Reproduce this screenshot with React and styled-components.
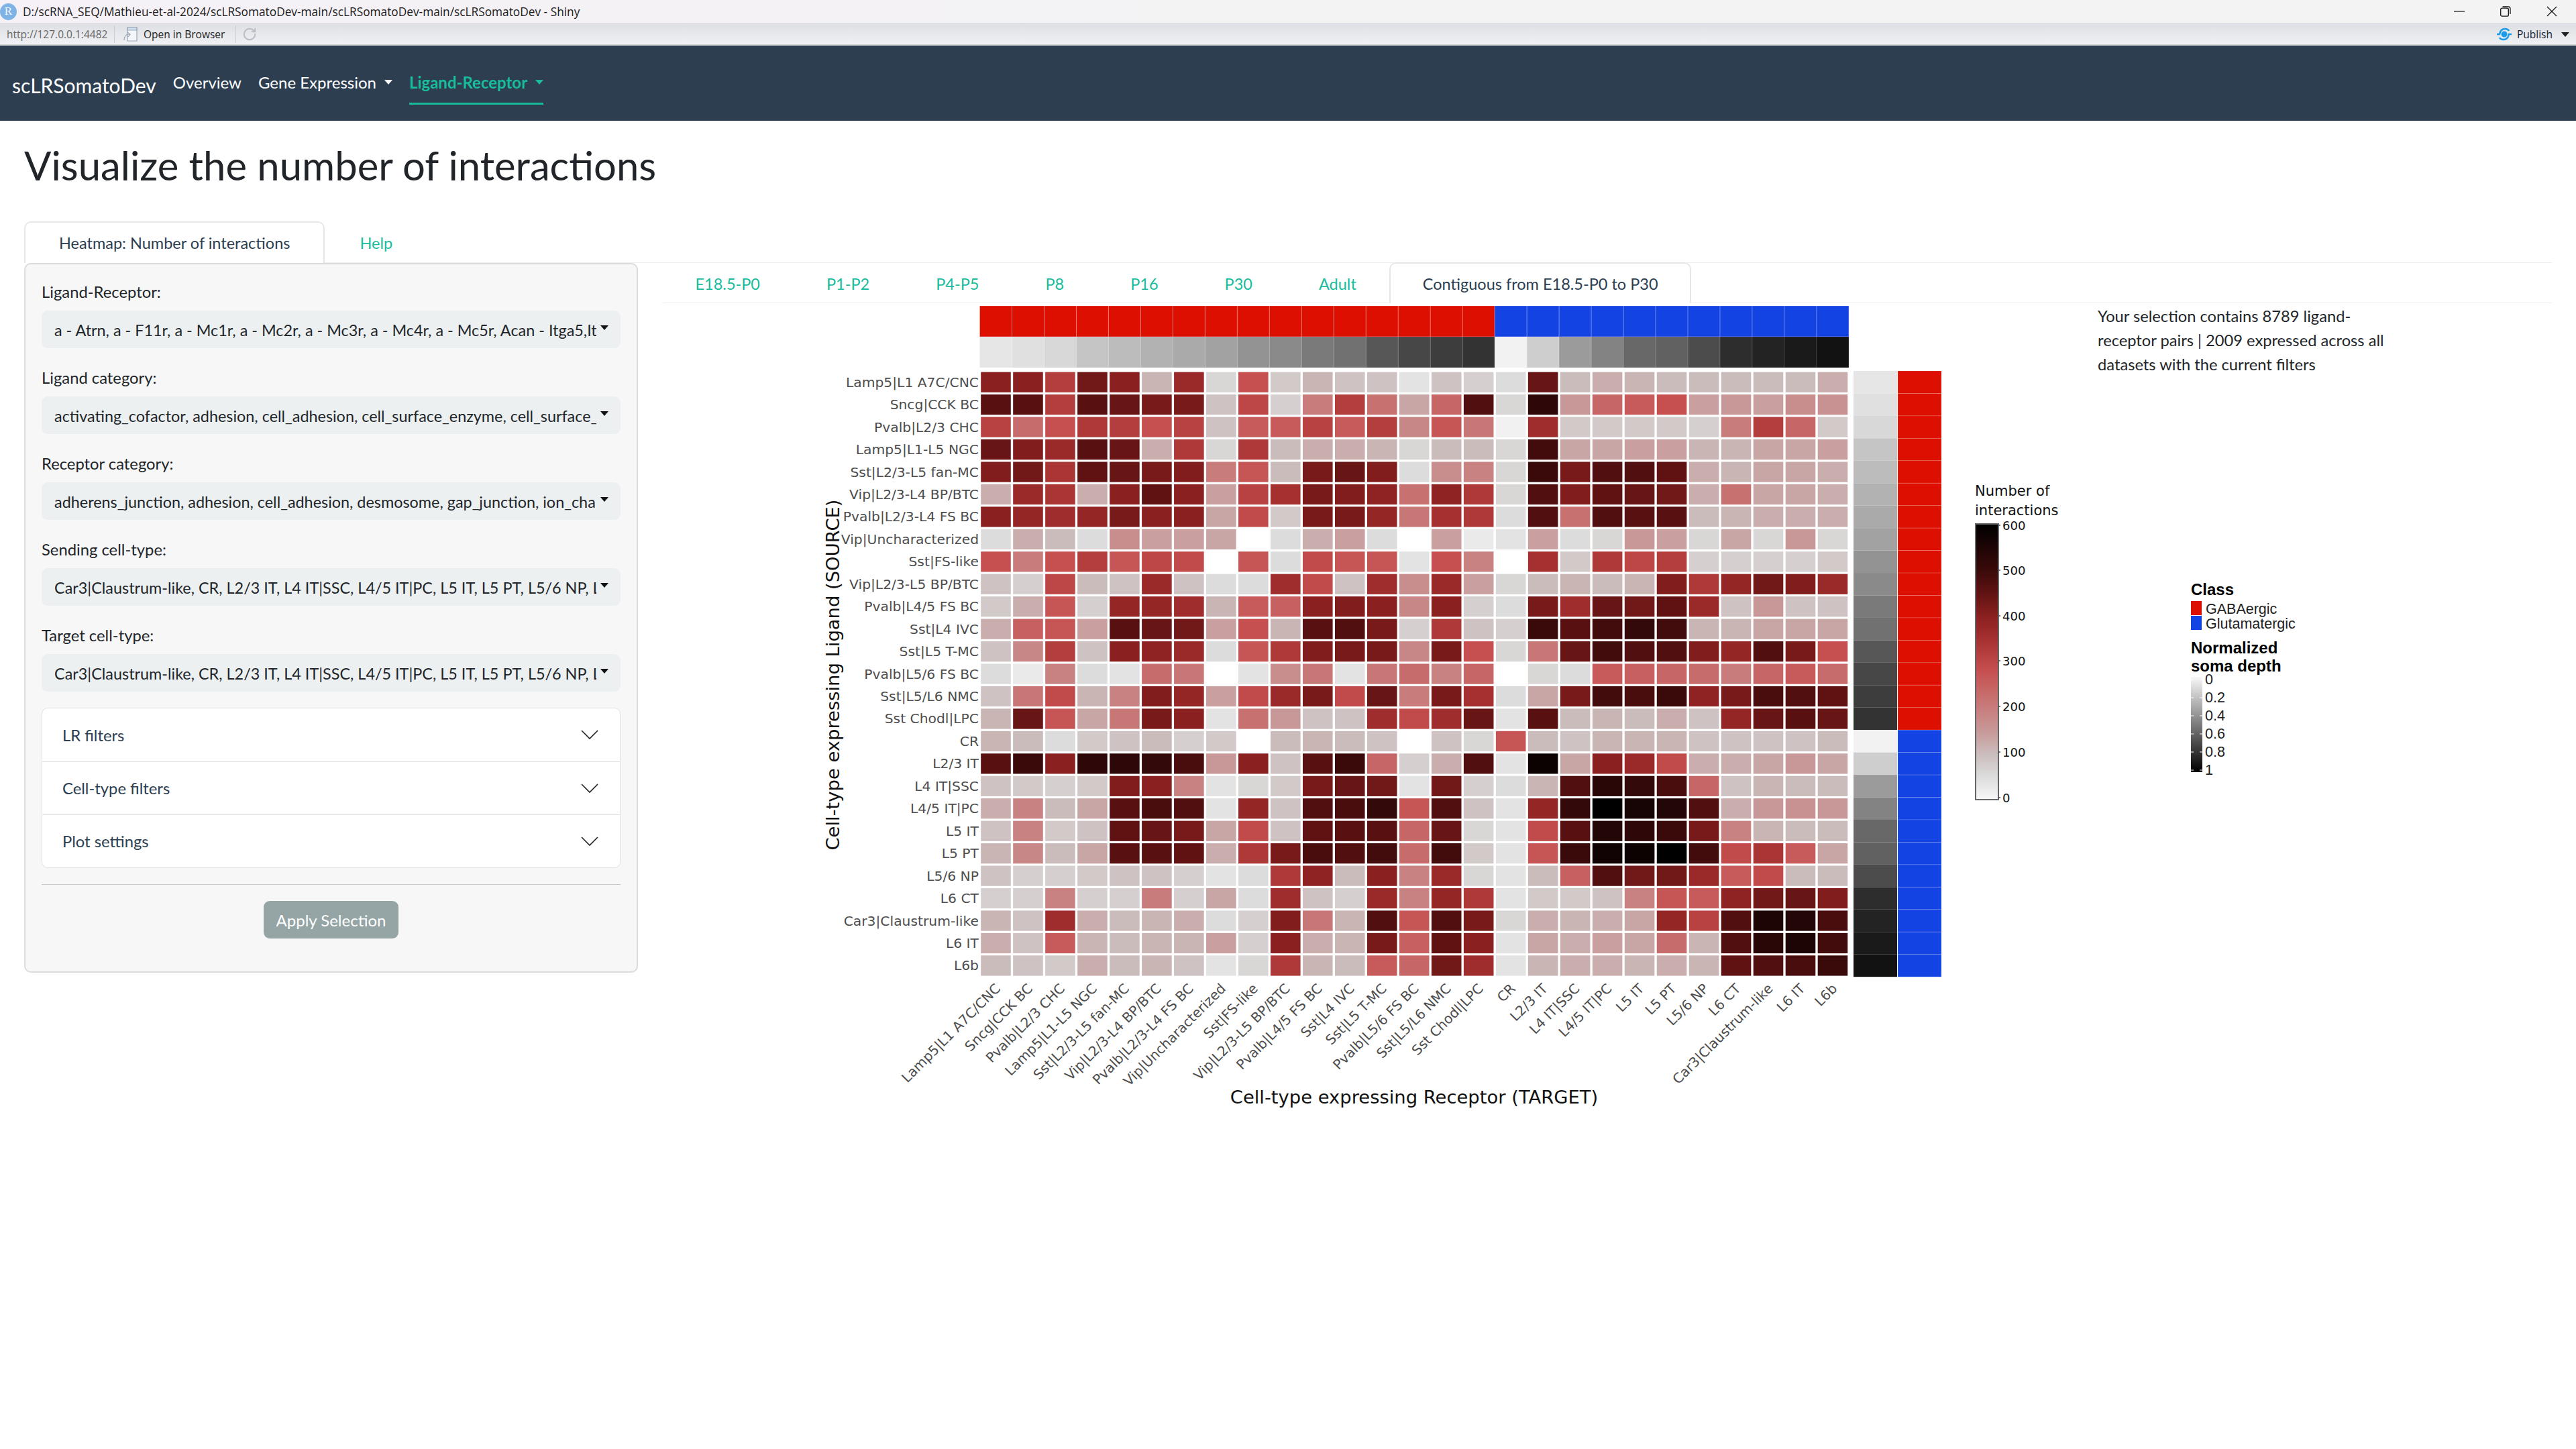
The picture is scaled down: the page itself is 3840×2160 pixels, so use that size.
import React from "react";
import styled, { createGlobalStyle } from "styled-components";
import { RotateCw } from "lucide-react";

const Global = createGlobalStyle`
  html, body { margin: 0; padding: 0; background: #fff; }
  body { font-family: Lato, "Open Sans", sans-serif; color: #212529; }
  * { box-sizing: border-box; }
`;

const Page = styled.div`
  width: 3840px;
  min-height: 2160px;
  background: #fff;
  overflow: hidden;
`;

/* ---------- window chrome ---------- */
const TitleBar = styled.div`
  height: 34px;
  display: flex;
  align-items: center;
  background: linear-gradient(90deg, #f5f1f7, #f3f3f3 60%);
`;
const RBadge = styled.div`
  width: 25px;
  height: 25px;
  margin-right: 9px;
  border-radius: 50%;
  background: #7fb2e5;
  color: #f4f8fd;
  font: 17px "Liberation Serif", serif;
  display: flex;
  align-items: center;
  justify-content: center;
`;
const WindowTitle = styled.div`
  flex: 1;
  font: 17.3px "Open Sans", sans-serif;
  color: #1a1a1a;
  white-space: nowrap;
`;
const WindowButtons = styled.div`
  display: flex;
  gap: 53px;
  padding-right: 28px;
  align-items: center;
`;
const Toolbar = styled.div`
  height: 34px;
  display: flex;
  align-items: center;
  padding: 2px 0 0 10px;
  background: linear-gradient(180deg, #dedfe4, #f0f1f3);
  border-bottom: 2px solid #cfd0d2;
`;
const UrlText = styled.span`
  font: 15.5px "Open Sans", sans-serif;
  color: #666;
  width: 160px;
  white-space: nowrap;
`;
const ToolSep = styled.div`
  width: 1px;
  height: 26px;
  background: #cbccce;
`;
const OpenBrowser = styled.div`
  display: flex;
  align-items: center;
  gap: 8px;
  padding: 0 16px 0 12px;
  font: 15.5px "Open Sans", sans-serif;
  color: #222;
  white-space: nowrap;
`;
const ToolGray = styled.div`
  display: flex;
  padding-left: 9px;
  color: #b9bec6;
`;
const PublishBox = styled.div`
  margin-left: auto;
  display: flex;
  align-items: center;
  gap: 7px;
  padding-right: 10px;
  font: 15.5px "Open Sans", sans-serif;
  color: #123;
`;
const PublishCaret = styled.span`
  display: inline-block;
  width: 0;
  height: 0;
  margin-left: 6px;
  border-left: 6.5px solid transparent;
  border-right: 6.5px solid transparent;
  border-top: 7px solid #222;
`;

/* ---------- navbar ---------- */
const Navbar = styled.nav`
  height: 112px;
  background: #2c3e50;
  display: flex;
  padding-left: 18px;
  align-items: center;
`;
const Brand = styled.div`
  font-size: 30px;
  color: #fff;
  margin-right: 25px;
  padding-top: 5px;
`;
const NavItem = styled.div`
  display: flex;
  align-items: center;
  gap: 12px;
  height: 64px;
  margin-right: 25px;
  font-size: 24px;
  color: ${p => (p.$active ? "#18bc9c" : "#fff")};
  font-weight: ${p => (p.$active ? 700 : 400)};
  border-bottom: 3px solid ${p => (p.$active ? "#18bc9c" : "transparent")};
`;
const Caret = styled.span`
  display: inline-block;
  width: 0;
  height: 0;
  border-left: 6.5px solid transparent;
  border-right: 6.5px solid transparent;
  border-top: 7px solid ${p => p.$color || "#212529"};
`;

/* ---------- main ---------- */
const Main = styled.main`
  padding: 0 36px;
`;
const Heading = styled.h1`
  margin: 0;
  padding: 29px 0 46px;
  height: 150px;
  font-size: 59.8px;
  font-weight: 400;
  line-height: 75px;
  color: #212529;
`;
const TabBar = styled.div`
  display: flex;
  height: ${p => p.$height}px;
  border-bottom: 1px solid #ecf0f1;
`;
const Tab = styled.div`
  padding: 0 ${p => p.$pad}px;
  display: flex;
  align-items: center;
  font-size: 23.5px;
  white-space: nowrap;
  margin-bottom: -1px;
  color: ${p => (p.$active ? "#2c3e50" : "#18bc9c")};
  background: ${p => (p.$active ? "#fff" : "transparent")};
  border: 2px solid ${p => (p.$active ? "#e4e8ea" : "transparent")};
  border-bottom: none;
  border-radius: 10px 10px 0 0;
`;
const Body = styled.div`
  display: flex;
  align-items: flex-start;
  gap: 36px;
`;

/* ---------- sidebar ---------- */
const Sidebar = styled.aside`
  width: 915px;
  flex: none;
  height: 1058px;
  padding: 24px 24px;
  background: #f7f7f7;
  border: 2px solid #dcdcdc;
  border-radius: 10px;
`;
const Field = styled.div`
  margin-bottom: 27px;
`;
const Label = styled.div`
  font-size: 23.8px;
  line-height: 36px;
  margin-bottom: 10px;
  margin-top: -1px;
  color: #212529;
`;
const Select = styled.div`
  height: 56px;
  border-radius: 9px;
  background: #ecf0f1;
  padding: 2px 18px 0 19px;
  display: flex;
  align-items: center;
  gap: 6px;
  font-size: 23.4px;
`;
const SelectText = styled.div`
  flex: 1;
  overflow: hidden;
  white-space: nowrap;
`;
const SelectCaret = styled(Caret)`
  margin-top: -7px;
`;
const Accordion = styled.div`
  background: #fff;
  border: 1px solid #dee2e6;
  border-radius: 9px;
  margin-top: -3px;
`;
const AccRow = styled.div`
  height: 79px;
  display: flex;
  align-items: center;
  justify-content: space-between;
  padding: 0 32px 0 30px;
  font-size: 23.8px;
  color: #2c3e50;
  & + & { border-top: 1px solid #dee2e6; }
`;
const Rule = styled.hr`
  margin: 24px 0;
  border: 0;
  border-top: 1px solid #c6c8ca;
`;
const Center = styled.div`
  display: flex;
  justify-content: center;
`;
const ApplyButton = styled.button`
  width: 201px;
  height: 56px;
  border: 0;
  border-radius: 9px;
  background: #95a5a6;
  color: #fff;
  font: 24px Lato, sans-serif;
`;

/* ---------- plot ---------- */
const RightPane = styled.section`
  flex: 1;
  margin-top: -1px;
  min-width: 0;
`;
const PlotArea = styled.div`
  position: relative;
`;
const PlotSvg = styled.svg`
  display: block;
  width: 2817px;
  height: 1250px;
`;
const SelectionNote = styled.p`
  position: absolute;
  top: 1px;
  left: 2140px;
  width: 445px;
  margin: 0;
  font-size: 23.7px;
  line-height: 36px;
  color: #212529;
`;
const AxisText = styled.text`
  font-family: "DejaVu Sans", sans-serif;
  font-size: 20.3px;
  fill: #4d4d4d;
`;
const AxisTitle = styled.text`
  font-family: "DejaVu Sans", sans-serif;
  font-size: 27.4px;
  fill: #111;
`;
const BarTitle = styled.text`
  font-family: "DejaVu Sans", sans-serif;
  font-size: 21px;
  fill: #111;
`;
const BarTick = styled.text`
  font-family: "DejaVu Sans", sans-serif;
  font-size: 18px;
  fill: #111;
`;
const LegendHead = styled.text`
  font-family: "Liberation Sans", sans-serif;
  font-size: 24px;
  font-weight: 700;
  fill: #000;
`;
const LegendItem = styled.text`
  font-family: "Liberation Sans", sans-serif;
  font-size: 21.5px;
  fill: #222;
`;

/* ---------- data ---------- */
const labels = [
  "Lamp5|L1 A7C/CNC", "Sncg|CCK BC", "Pvalb|L2/3 CHC", "Lamp5|L1-L5 NGC", "Sst|L2/3-L5 fan-MC",
  "Vip|L2/3-L4 BP/BTC", "Pvalb|L2/3-L4 FS BC", "Vip|Uncharacterized", "Sst|FS-like", "Vip|L2/3-L5 BP/BTC",
  "Pvalb|L4/5 FS BC", "Sst|L4 IVC", "Sst|L5 T-MC", "Pvalb|L5/6 FS BC", "Sst|L5/L6 NMC", "Sst Chodl|LPC",
  "CR", "L2/3 IT", "L4 IT|SSC", "L4/5 IT|PC", "L5 IT", "L5 PT", "L5/6 NP", "L6 CT", "Car3|Claustrum-like", "L6 IT", "L6b",
];
const depth = ["e6e6e6","e0e0e0","d8d8d8","c5c5c5","bcbcbc","b2b2b2","aaaaaa","a2a2a2","939393","8a8a8a","7a7a7a","717171","575757","474747","3d3d3d","333333",
  "f2f2f2","cecece","9b9b9b","838383","686868","616161","4c4c4c","2d2d2d","232323","1a1a1a","121212"];
const M = [
  [40,40,32,43,40,11,37,6,28,8,11,9,9,4,9,7,5,44,10,12,11,10,10,10,10,10,12],
  [46,46,32,46,44,42,42,9,30,7,20,32,22,13,24,47,6,52,15,24,26,28,14,15,14,17,16],
  [31,23,28,33,32,28,31,9,26,26,31,26,32,18,27,21,2,36,8,8,8,8,7,20,32,24,8],
  [44,41,37,46,44,12,33,6,33,10,12,12,11,6,10,10,6,49,13,13,14,14,11,11,13,13,14],
  [41,43,34,45,44,42,41,20,27,10,42,44,41,5,17,19,6,50,42,47,47,45,12,11,13,13,12],
  [12,37,34,12,40,45,40,14,31,35,42,41,39,22,39,33,6,47,41,45,44,43,12,22,13,13,12],
  [40,38,36,38,42,40,40,13,29,8,42,42,38,21,35,33,5,47,22,47,46,46,10,11,12,12,12],
  [5,12,10,5,17,14,14,13,0,5,12,14,5,0,14,3,4,14,5,6,15,14,6,13,6,15,6],
  [28,20,28,32,27,30,29,0,27,5,29,27,27,4,28,19,0,35,8,33,30,32,7,7,7,7,8],
  [9,7,30,10,9,37,9,5,5,36,29,9,36,17,37,14,6,10,11,10,11,41,33,38,43,41,37],
  [8,12,27,7,38,38,36,11,26,25,40,41,40,18,40,7,5,42,36,44,43,45,37,9,15,9,9],
  [12,25,27,14,46,44,43,14,28,11,46,47,42,7,33,9,7,50,46,49,51,49,11,11,13,13,13],
  [9,18,32,9,40,39,37,5,27,33,41,42,42,18,42,28,6,21,44,49,47,47,41,38,47,42,28],
  [5,3,19,5,4,23,21,0,4,17,21,4,21,23,19,24,0,6,5,26,25,24,23,20,24,26,23],
  [9,21,29,11,19,41,38,14,29,37,42,29,44,20,42,35,5,13,42,49,48,50,39,42,48,47,45],
  [11,44,27,13,21,42,40,4,22,15,9,9,36,29,36,44,4,46,10,11,10,12,9,38,44,46,44],
  [11,10,5,8,9,10,7,8,0,10,11,10,9,0,9,6,27,10,9,11,11,11,9,9,9,9,10],
  [46,50,40,52,52,51,48,15,40,9,46,50,24,7,12,47,4,58,13,40,37,29,12,12,13,15,13],
  [9,8,7,8,41,40,19,4,6,8,42,44,43,4,43,7,5,11,47,53,51,48,24,9,11,10,10],
  [12,19,10,13,46,48,47,4,38,9,47,48,51,27,47,9,4,38,51,60,56,54,47,12,15,16,15],
  [9,19,8,9,45,44,42,13,29,9,45,46,46,24,44,6,4,29,46,54,52,50,42,19,11,10,10],
  [11,18,10,13,46,46,45,12,33,42,48,47,49,23,49,8,4,27,50,57,58,60,49,29,34,26,13],
  [9,7,7,8,9,9,7,4,5,33,39,10,40,19,37,6,4,10,25,47,43,43,37,26,29,10,10],
  [7,7,19,7,7,20,7,13,5,36,9,7,37,19,38,33,4,8,8,9,19,27,26,39,43,44,41],
  [11,9,36,12,10,11,12,5,7,41,21,11,47,27,47,42,6,12,11,12,13,38,31,47,55,54,48],
  [12,9,26,11,10,11,11,14,7,40,12,11,42,25,45,40,4,13,12,14,13,23,11,47,53,55,49],
  [10,9,8,12,10,11,9,4,6,33,11,10,26,24,43,36,4,11,12,12,11,12,11,45,47,48,50],
];
const stops = [
  [0, [255, 255, 255]], [5, [220, 220, 220]], [10, [203, 188, 188]], [15, [200, 152, 152]],
  [20, [200, 124, 124]], [28, [198, 80, 80]], [35, [165, 48, 48]], [40, [138, 32, 32]],
  [45, [96, 18, 18]], [50, [58, 10, 10]], [60, [0, 0, 0]],
];
const heat = v => {
  for (let i = 1; i < stops.length; i++) {
    if (v <= stops[i][0]) {
      const [a, ca] = stops[i - 1];
      const [b, cb] = stops[i];
      const t = (v - a) / (b - a);
      const c = ca.map((x, k) => Math.round(x + (cb[k] - x) * t));
      return `rgb(${c.join(",")})`;
    }
  }
  return "#000";
};
const RED = "#dc0f00";
const BLUE = "#1443e3";
const classColor = i => (i < 16 ? RED : BLUE);

const X0 = 1460.5, CW = 47.98, Y0 = 554, RH = 33.45;
const colX = i => X0 + i * CW;
const rowY = i => Y0 + i * RH;
const barTicks = [[600, 784], [500, 851], [400, 919], [300, 986], [200, 1054], [100, 1122], [0, 1190]];
const depthTicks = [["0", 1014], ["0.2", 1041], ["0.4", 1068], ["0.6", 1095], ["0.8", 1122], ["1", 1149]];

function Heatmap() {
  return (
    <PlotSvg viewBox="987 453 2817 1250">
      <defs>
        <linearGradient id="numBar" x1="0" y1="1" x2="0" y2="0">
          {[0, 5, 10, 15, 20, 28, 35, 40, 45, 50, 60].map(v => (
            <stop key={v} offset={v / 60} stopColor={v === 0 ? "#f7f7f7" : heat(v)} />
          ))}
        </linearGradient>
        <linearGradient id="depthBar" x1="0" y1="0" x2="0" y2="1">
          <stop offset="0" stopColor="#f8f8f8" />
          <stop offset="1" stopColor="#000" />
        </linearGradient>
      </defs>

      {labels.map((_, i) => (
        <g key={i}>
          <rect x={colX(i)} y={457} width={CW} height={46} fill={classColor(i)} stroke="rgba(255,255,255,.25)" strokeWidth="1" />
          <rect x={colX(i)} y={503} width={CW} height={46} fill={`#${depth[i]}`} stroke="rgba(255,255,255,.12)" strokeWidth="1" />
          <rect x={2763} y={rowY(i)} width={65} height={RH} fill={`#${depth[i]}`} />
          <rect x={2829} y={rowY(i)} width={65} height={RH} fill={classColor(i)} stroke="rgba(255,255,255,.15)" strokeWidth="1" />
        </g>
      ))}

      {M.map((row, r) =>
        row.map((v, c) => (
          <rect key={`${r}-${c}`} x={colX(c) + 1.7} y={rowY(r) + 1.6} width={CW - 3.4} height={RH - 3.2} fill={heat(v)} />
        ))
      )}

      {labels.map((t, i) => (
        <AxisText key={t} x={1459} y={rowY(i) + RH / 2 + 7} textAnchor="end">{t}</AxisText>
      ))}
      {labels.map((t, i) => (
        <AxisText
          key={t}
          textAnchor="end"
          transform={`translate(${colX(i) + CW / 2 + 8} ${1476}) rotate(-45)`}
        >
          {t}
        </AxisText>
      ))}

      <AxisTitle transform="translate(1251 1007) rotate(-90)" textAnchor="middle">
        Cell-type expressing Ligand (SOURCE)
      </AxisTitle>
      <AxisTitle x={2108} y={1646} textAnchor="middle">
        Cell-type expressing Receptor (TARGET)
      </AxisTitle>

      <BarTitle x={2944} y={740}>Number of</BarTitle>
      <BarTitle x={2944} y={769}>interactions</BarTitle>
      <rect x={2945} y={782} width={34} height={411} fill="url(#numBar)" stroke="#666" strokeWidth="2" />
      {barTicks.map(([v, y]) => (
        <g key={v}>
          <line x1={2979} x2={2982} y1={y} y2={y} stroke="#444" strokeWidth="1.5" />
          <BarTick x={2985} y={y + 7}>{v}</BarTick>
        </g>
      ))}

      <LegendHead x={3266} y={888}>Class</LegendHead>
      <rect x={3266} y={897} width={16} height={21} fill={RED} />
      <rect x={3266} y={919} width={16} height={21} fill={BLUE} />
      <LegendItem x={3288} y={916}>GABAergic</LegendItem>
      <LegendItem x={3288} y={938}>Glutamatergic</LegendItem>
      <LegendHead x={3266} y={975}>Normalized</LegendHead>
      <LegendHead x={3266} y={1002}>soma depth</LegendHead>
      <rect x={3266} y={1010} width={17} height={142} fill="url(#depthBar)" />
      {depthTicks.map(([t, y]) => (
        <g key={t}>
          <line x1={3266} x2={3270} y1={y} y2={y} stroke="#fff" strokeWidth="1" />
          <line x1={3279} x2={3283} y1={y} y2={y} stroke="#fff" strokeWidth="1" />
          <LegendItem x={3287} y={y + 7}>{t}</LegendItem>
        </g>
      ))}
    </PlotSvg>
  );
}

const fields = [
  ["Ligand-Receptor:", "a - Atrn, a - F11r, a - Mc1r, a - Mc2r, a - Mc3r, a - Mc4r, a - Mc5r, Acan - Itga5,Itgb1, Acan - Itgav,Itgb3"],
  ["Ligand category:", "activating_cofactor, adhesion, cell_adhesion, cell_surface_enzyme, cell_surface_receptor, co-receptor"],
  ["Receptor category:", "adherens_junction, adhesion, cell_adhesion, desmosome, gap_junction, ion_channel, other, receptor"],
  ["Sending cell-type:", "Car3|Claustrum-like, CR, L2/3 IT, L4 IT|SSC, L4/5 IT|PC, L5 IT, L5 PT, L5/6 NP, L6 CT, L6 IT, L6b"],
  ["Target cell-type:", "Car3|Claustrum-like, CR, L2/3 IT, L4 IT|SSC, L4/5 IT|PC, L5 IT, L5 PT, L5/6 NP, L6 CT, L6 IT, L6b"],
];

const Chevron = () => (
  <svg width="26" height="15" viewBox="0 0 26 15" fill="none" stroke="#212529" strokeWidth="1.6">
    <path d="M1 1l12 12L25 1" />
  </svg>
);

export default function App() {
  return (
    <Page>
      <Global />
      <TitleBar>
        <RBadge>R</RBadge>
        <WindowTitle>D:/scRNA_SEQ/Mathieu-et-al-2024/scLRSomatoDev-main/scLRSomatoDev-main/scLRSomatoDev - Shiny</WindowTitle>
        <WindowButtons>
          <svg width="16" height="16" viewBox="0 0 16 16" stroke="#111" strokeWidth="1.2" fill="none"><path d="M0 8h16" /></svg>
          <svg width="16" height="16" viewBox="0 0 16 16" stroke="#111" strokeWidth="1.3" fill="none"><rect x="0.7" y="3.2" width="11.6" height="12" rx="2" /><path d="M3.5 1h8.5a3 3 0 0 1 3 3v8" /></svg>
          <svg width="16" height="16" viewBox="0 0 16 16" stroke="#111" strokeWidth="1.2" fill="none"><path d="M1 1l14 14M15 1L1 15" /></svg>
        </WindowButtons>
      </TitleBar>
      <Toolbar>
        <UrlText>http://127.0.0.1:4482</UrlText>
        <ToolSep />
        <OpenBrowser>
          <svg width="23" height="24" viewBox="0 0 23 24" fill="#f3f6fa" stroke="#9aa6b4" strokeWidth="1.2">
            <path d="M7 2h14v20H7z" />
            <path d="M7 2h14v4H7z" fill="#cfe0f2" />
            <path d="M2 21c0-6 3-9 8-9M7 9l4 3-3 4" fill="none" />
          </svg>
          Open in Browser
        </OpenBrowser>
        <ToolSep />
        <ToolGray><RotateCw size={22} strokeWidth={2.2} /></ToolGray>
        <PublishBox>
          <svg width="24" height="22" viewBox="0 0 24 22" fill="none" stroke="#1b9be8" strokeWidth="2.6">
            <circle cx="12" cy="11" r="3.2" fill="#1b9be8" />
            <path d="M1 11h4c1-5 4-8 8-8 3 0 5 1 6 3M23 11h-4c-1 5-4 8-8 8-3 0-5-1-6-3" />
          </svg>
          Publish
          <PublishCaret />
        </PublishBox>
      </Toolbar>

      <Navbar>
        <Brand>scLRSomatoDev</Brand>
        <NavItem>Overview</NavItem>
        <NavItem>Gene Expression <Caret $color="#fff" /></NavItem>
        <NavItem $active>Ligand-Receptor <Caret $color="#18bc9c" /></NavItem>
      </Navbar>

      <Main>
        <Heading>Visualize the number of interactions</Heading>
        <TabBar $height={62}>
          <Tab $active $pad={50}>Heatmap: Number of interactions</Tab>
          <Tab $pad={50}>Help</Tab>
        </TabBar>
        <Body>
          <Sidebar>
            {fields.map(([label, value]) => (
              <Field key={label}>
                <Label>{label}</Label>
                <Select>
                  <SelectText>{value}</SelectText>
                  <SelectCaret $color="#111" />
                </Select>
              </Field>
            ))}
            <Accordion>
              <AccRow>LR filters <Chevron /></AccRow>
              <AccRow>Cell-type filters <Chevron /></AccRow>
              <AccRow>Plot settings <Chevron /></AccRow>
            </Accordion>
            <Rule />
            <Center><ApplyButton>Apply Selection</ApplyButton></Center>
          </Sidebar>
          <RightPane>
            <TabBar $height={61}>
              {["E18.5-P0", "P1-P2", "P4-P5", "P8", "P16", "P30", "Adult"].map(t => <Tab key={t} $pad={47.5}>{t}</Tab>)}
              <Tab $active $pad={47.5}>Contiguous from E18.5-P0 to P30</Tab>
            </TabBar>
            <PlotArea>
              <Heatmap />
              <SelectionNote>
                Your selection contains 8789 ligand-receptor pairs | 2009 expressed across all datasets with the current filters
              </SelectionNote>
            </PlotArea>
          </RightPane>
        </Body>
      </Main>
    </Page>
  );
}
